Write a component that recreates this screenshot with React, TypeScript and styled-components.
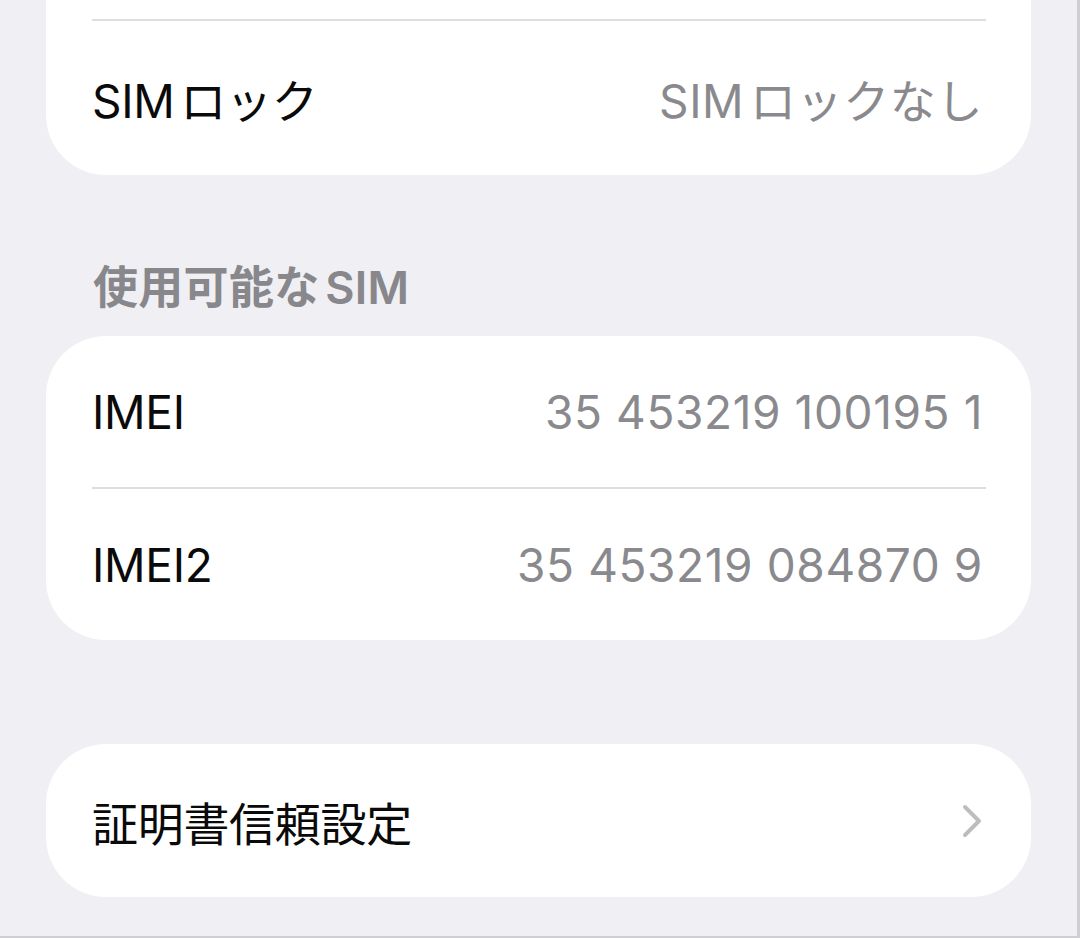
import React from 'react';
import styled, { createGlobalStyle } from 'styled-components';

const GlobalStyle = createGlobalStyle`
  html, body {
    margin: 0;
    padding: 0;
    background: #efeff4;
  }
  body {
    font-family: Inter, 'Noto Sans CJK JP', sans-serif;
    -webkit-font-smoothing: antialiased;
    text-autospace: normal;
  }
`;

// Settings screen scrolled part way down
const Screen = styled.div`
  box-sizing: border-box;
  width: 1080px;
  height: 938px;
  overflow: hidden;
  background: #efeff4;
  padding: 0 46px 0 46px;
  border-right: 3px solid #cfcfd3;
  border-bottom: 2px solid #cfcfd3;
  display: flex;
  flex-direction: column;
`;

const Card = styled.section<{ $flatTop?: boolean; $gap?: number }>`
  background: #ffffff;
  border-radius: ${(p) => (p.$flatTop ? '0 0 60px 60px' : '60px')};
  margin-top: ${(p) => p.$gap ?? 0}px;
  display: flex;
  flex-direction: column;
  overflow: hidden;
`;

const TopSpacer = styled.div`
  height: 19px;
`;

const Divider = styled.div`
  height: 2px;
  background: #dedee2;
  margin: 0 45px 0 46px;
`;

const Row = styled.div<{ $h?: number }>`
  height: ${(p) => p.$h ?? 151}px;
  display: flex;
  align-items: center;
  justify-content: space-between;
  padding: 0 48px 0 46px;
`;

const Label = styled.span`
  font-size: 46px;
  color: #0a0a0a;
  letter-spacing: -0.3px;
`;

const Value = styled.span`
  font-size: 46px;
  color: #8a8a8e;
  letter-spacing: 0.6px;
`;

const SectionHeader = styled.h2`
  margin: 0;
  padding: 88px 46px 23px 47px;
  line-height: 50px;
  font-size: 45px;
  font-weight: 600;
  color: #87878c;
  letter-spacing: 0.3px;
`;

const Chevron = () => (
  <svg width="22" height="36" viewBox="0 0 22 36" fill="none">
    <path
      d="M4 4 L18 18 L4 32"
      stroke="#bdbdc1"
      strokeWidth="4"
      strokeLinecap="round"
      strokeLinejoin="round"
    />
  </svg>
);

const imeiRows = [
  { label: 'IMEI', value: '35 453219 100195 1' },
  { label: 'IMEI2', value: '35 453219 084870 9' },
];

const App: React.FC = () => {
  return (
    <>
      <GlobalStyle />
      <Screen>
        <Card $flatTop>
          <TopSpacer />
          <Divider />
          <Row $h={154}>
            <Label>SIMロック</Label>
            <Value>SIMロックなし</Value>
          </Row>
        </Card>

        <SectionHeader>使用可能なSIM</SectionHeader>
        <Card>
          {imeiRows.map((row, i) => (
            <React.Fragment key={row.label}>
              {i > 0 && <Divider />}
              <Row>
                <Label>{row.label}</Label>
                <Value>{row.value}</Value>
              </Row>
            </React.Fragment>
          ))}
        </Card>

        <Card $gap={104}>
          <Row $h={153}>
            <Label>証明書信頼設定</Label>
            <Chevron />
          </Row>
        </Card>
      </Screen>
    </>
  );
};

export default App;
